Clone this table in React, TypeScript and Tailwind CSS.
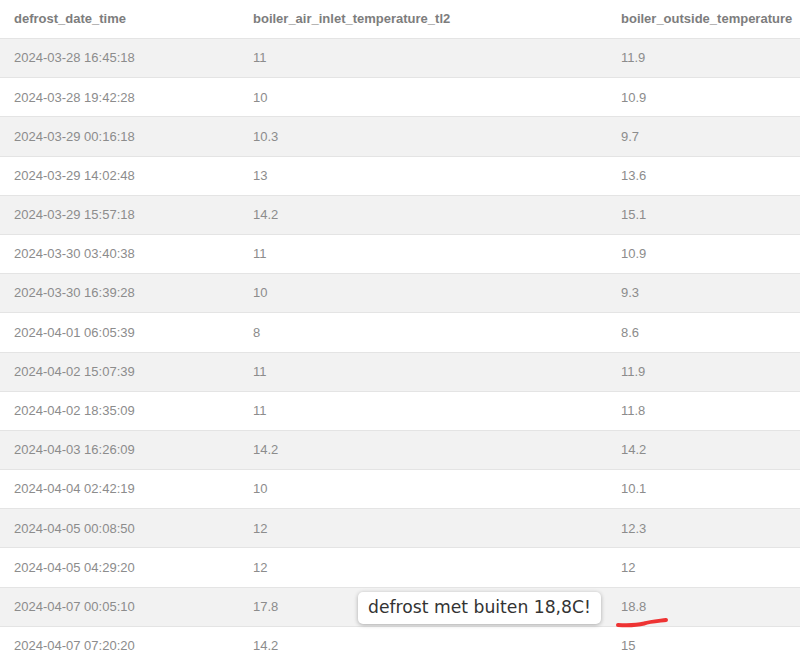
import React from 'react';

const rows: [string, string, string][] = [
  ['2024-03-28 16:45:18', '11', '11.9'],
  ['2024-03-28 19:42:28', '10', '10.9'],
  ['2024-03-29 00:16:18', '10.3', '9.7'],
  ['2024-03-29 14:02:48', '13', '13.6'],
  ['2024-03-29 15:57:18', '14.2', '15.1'],
  ['2024-03-30 03:40:38', '11', '10.9'],
  ['2024-03-30 16:39:28', '10', '9.3'],
  ['2024-04-01 06:05:39', '8', '8.6'],
  ['2024-04-02 15:07:39', '11', '11.9'],
  ['2024-04-02 18:35:09', '11', '11.8'],
  ['2024-04-03 16:26:09', '14.2', '14.2'],
  ['2024-04-04 02:42:19', '10', '10.1'],
  ['2024-04-05 00:08:50', '12', '12.3'],
  ['2024-04-05 04:29:20', '12', '12'],
  ['2024-04-07 00:05:10', '17.8', '18.8'],
  ['2024-04-07 07:20:20', '14.2', '15'],
];

export default function App() {
  return (
    <div className="relative w-[800px] h-[668px] overflow-hidden bg-white font-['Liberation_Sans',Arial,sans-serif] text-[13px]">
      <div className="grid grid-cols-[239px_368px_1fr] h-[38px] items-center font-bold text-[#7d7d7d]">
        <div className="pl-[14px]">defrost_date_time</div>
        <div className="pl-[14px]">boiler_air_inlet_temperature_tl2</div>
        <div className="pl-[14px]">boiler_outside_temperature</div>
      </div>
      {rows.map((r, i) => (
        <div
          key={i}
          className={`grid grid-cols-[239px_368px_1fr] h-[39.2px] items-center border-t border-[#e4e4e4] text-[#8c8c8c] ${
            i % 2 === 0 ? 'bg-[#f2f2f2]' : 'bg-white'
          }`}
        >
          <div className="pl-[14px]">{r[0]}</div>
          <div className="pl-[14px]">{r[1]}</div>
          <div className="pl-[14px]">{r[2]}</div>
        </div>
      ))}

      {/* annotation */}
      <div className="absolute left-[358px] top-[592px] w-[243px] h-[32px] rounded-[5px] bg-white shadow-[0_1px_4px_rgba(0,0,0,0.3)] flex items-center justify-center font-['DejaVu_Sans',sans-serif] text-[17.2px] text-[#333]">
        defrost met buiten 18,8C!
      </div>
      <svg className="absolute left-[612px] top-[614px]" width="62" height="16" viewBox="0 0 62 16">
        <path d="M6 11 C16 11.5 26 11 32 9.5 C38 7.5 46 7 54 6" stroke="#ee3333" strokeWidth="4" strokeLinecap="round" fill="none" />
      </svg>
    </div>
  );
}
